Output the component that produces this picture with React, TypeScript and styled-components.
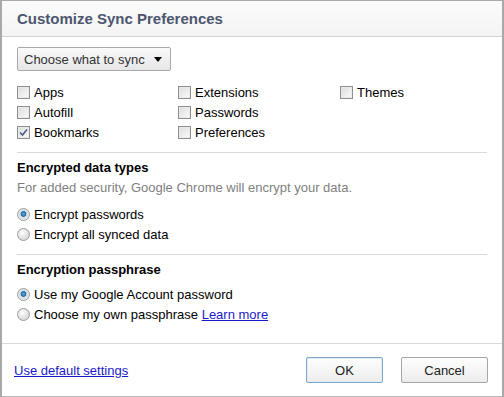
import styled, { createGlobalStyle } from 'styled-components';

const GlobalStyle = createGlobalStyle`
  html, body {
    margin: 0;
    padding: 0;
    background: #ffffff;
  }
  body {
    font-family: "Liberation Sans", Arial, sans-serif;
    font-size: 13px;
    color: #000;
  }
`;

const Dialog = styled.div`
  box-sizing: border-box;
  width: 504px;
  height: 397px;
  border: 1px solid #a9a9a9;
  border-left-width: 2px;
  border-right-width: 2px;
  border-bottom-color: #b5b5b5;
  display: flex;
  flex-direction: column;
  background: #fff;
`;

const Header = styled.div`
  height: 35px;
  display: flex;
  align-items: center;
  padding-left: 15px;
  background: linear-gradient(#fbfbfb, #f4f4f4);
  border-bottom: 1px solid #d4d4d4;
`;

const Title = styled.h1`
  margin: 0;
  font-size: 15px;
  font-weight: bold;
  color: #4c566e;
`;

const Body = styled.div`
  flex: 1;
  padding: 10px 13px 0 15px;
`;

const Dropdown = styled.button`
  box-sizing: border-box;
  width: 154px;
  height: 24px;
  display: flex;
  align-items: center;
  justify-content: space-between;
  padding: 0 6px 0 6px;
  font-family: inherit;
  font-size: 13px;
  color: #333;
  border: 1px solid #aaa;
  border-radius: 2px;
  background: linear-gradient(#fafafa, #e6e6e6);
`;

const Arrow = styled.span`
  width: 0;
  height: 0;
  border-left: 4px solid transparent;
  border-right: 4px solid transparent;
  border-top: 5px solid #000;
  margin-right: 2px;
`;

const CheckGrid = styled.div`
  display: grid;
  grid-template-columns: 161px 162px auto;
  grid-auto-rows: 20px;
  margin-top: 11px;
`;

const Option = styled.label`
  display: flex;
  align-items: center;
  gap: 4px;
  height: 20px;
  white-space: nowrap;
`;

const Box = styled.span<{ $checked?: boolean }>`
  box-sizing: border-box;
  width: 13px;
  height: 13px;
  border: 1px solid #8f8f8f;
  background: linear-gradient(135deg, #dcdcdc, #fbfbfb);
  box-shadow: inset 0 0 0 1px #eaeaea;
  display: flex;
  align-items: center;
  justify-content: center;
`;

const Radio = styled.span<{ $checked?: boolean }>`
  box-sizing: border-box;
  width: 13px;
  height: 13px;
  border-radius: 50%;
  border: 1px solid #9a9a9a;
  background: ${({ $checked }) =>
    $checked
      ? 'radial-gradient(circle at 50% 45%, #6aa6d8 0, #2b6aa6 2.5px, #c8dbe9 3.2px, #e8e8e8 5px)'
      : 'radial-gradient(circle at 40% 35%, #fdfdfd 0, #dedede 6px)'};
`;

const Divider = styled.div<{ $inset?: boolean }>`
  height: 1px;
  background: #dadada;
  margin: ${({ $inset }) => ($inset ? '10px 2px 5px 0' : '0')};
`;

const Heading = styled.div`
  font-weight: bold;
  line-height: 20px;
`;

const Note = styled.div`
  color: #808080;
  line-height: 20px;
  margin-bottom: 6px;
`;

const RadioList = styled.div<{ $top?: number }>`
  margin-top: ${({ $top }) => $top ?? 0}px;
`;

const Link = styled.a`
  color: #1a1acc;
  text-decoration: underline;
  cursor: pointer;
`;

const Footer = styled.div`
  height: 52px;
  display: flex;
  align-items: center;
  padding: 0 14px 0 12px;
`;

const FooterLink = styled(Link)`
  flex: 1;
`;

const Button = styled.button<{ $focused?: boolean; $width: number }>`
  box-sizing: border-box;
  width: ${({ $width }) => $width}px;
  height: 26px;
  margin-left: ${({ $focused }) => ($focused ? 0 : 18)}px;
  font-family: inherit;
  font-size: 13px;
  color: #222;
  border-radius: 2px;
  border: 1px solid ${({ $focused }) => ($focused ? '#7fa6cc' : '#a6a6a6')};
  background: linear-gradient(#fefefe, #ececec);
  box-shadow: ${({ $focused }) => ($focused ? 'inset 0 0 0 1px #e2ecf6' : 'none')};
`;

const Check = () => (
  <svg width="9" height="9" viewBox="0 0 9 9">
    <path d="M1 4.5 L3.5 7 L8 1.5" fill="none" stroke="#4a5a8a" strokeWidth="1.6" />
  </svg>
);

const CheckItem = ({ label, checked }: { label: string; checked?: boolean }) => (
  <Option>
    <Box $checked={checked}>{checked && <Check />}</Box>
    {label}
  </Option>
);

const RadioItem = ({ children, checked }: { children: React.ReactNode; checked?: boolean }) => (
  <Option>
    <Radio $checked={checked} />
    <span>{children}</span>
  </Option>
);

export default function App() {
  return (
    <>
      <GlobalStyle />
      <Dialog>
        <Header>
          <Title>Customize Sync Preferences</Title>
        </Header>
        <Body>
          <Dropdown>
            Choose what to sync
            <Arrow />
          </Dropdown>
          <CheckGrid>
            <CheckItem label="Apps" />
            <CheckItem label="Extensions" />
            <CheckItem label="Themes" />
            <CheckItem label="Autofill" />
            <CheckItem label="Passwords" />
            <span />
            <CheckItem label="Bookmarks" checked />
            <CheckItem label="Preferences" />
          </CheckGrid>
          <Divider $inset />
          <Heading>Encrypted data types</Heading>
          <Note>For added security, Google Chrome will encrypt your data.</Note>
          <RadioList>
            <RadioItem checked>Encrypt passwords</RadioItem>
            <RadioItem>Encrypt all synced data</RadioItem>
          </RadioList>
          <Divider $inset />
          <Heading>Encryption passphrase</Heading>
          <RadioList $top={4}>
            <RadioItem checked>Use my Google Account password</RadioItem>
            <RadioItem>
              Choose my own passphrase <Link>Learn more</Link>
            </RadioItem>
          </RadioList>
        </Body>
        <Divider />
        <Footer>
          <FooterLink>Use default settings</FooterLink>
          <Button $focused $width={77}>OK</Button>
          <Button $width={87}>Cancel</Button>
        </Footer>
      </Dialog>
    </>
  );
}
